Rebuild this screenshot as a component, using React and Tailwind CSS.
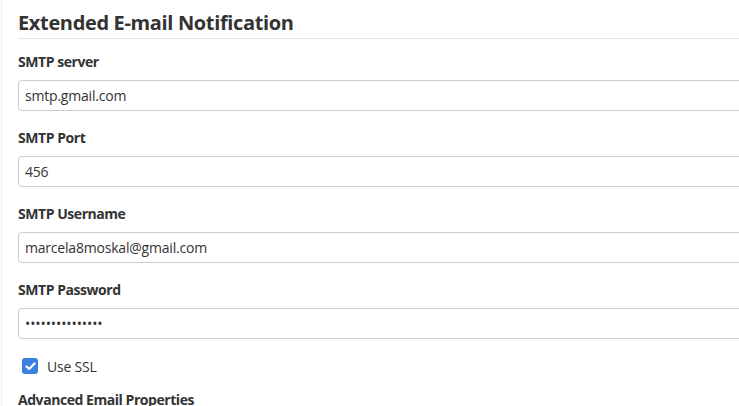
import React from "react";

const font = { fontFamily: '"Open Sans", "Noto Sans", sans-serif' };

function Field({ label, value, type = "text" }) {
  return (
    <div className="mb-[17px]">
      <label className="block text-[14px] leading-[20px] font-bold text-[#333] mb-[8px] tracking-[-0.45px]">{label}</label>
      <div className="h-[31px] border border-[#ccc] rounded-[4px] bg-white flex items-center pl-[6px] text-[14px] text-[#333] mr-[-10px] tracking-[-0.2px]">
        {type === "password" ? (
          <span className="tracking-[-0.1px] text-[14px] leading-none">{"•".repeat(15)}</span>
        ) : (
          value
        )}
      </div>
    </div>
  );
}

export default function App() {
  return (
    <div className="w-[739px] h-[406px] overflow-hidden bg-white pl-[1px]" style={font}>
      <div className="border-l border-[#eee] pl-[16px] h-full pt-[9px]">
        <h2 className="text-[20px] leading-[28px] font-bold text-[#333] pb-[1px] border-b border-[#e5e5e5] mr-[-10px] tracking-[-0.35px]">
          Extended E-mail Notification
        </h2>
        <div className="pt-[13px]">
          <Field label="SMTP server" value="smtp.gmail.com" />
          <Field label="SMTP Port" value="456" />
          <Field label="SMTP Username" value="marcela8moskal@gmail.com" />
          <Field label="SMTP Password" type="password" />
          <div className="flex items-center pl-[4px] h-[20px] mt-[2px]">
            <span className="w-[16px] h-[16px] rounded-[3px] bg-[#3a80e0] flex items-center justify-center">
              <svg width="11" height="9" viewBox="0 0 11 9" fill="none">
                <path d="M1.5 4.5 L4.2 7 L9.5 1.5" stroke="white" strokeWidth="2.2" strokeLinecap="round" strokeLinejoin="round" />
              </svg>
            </span>
            <span className="ml-[9px] text-[14px] text-[#333] tracking-[-0.2px]">Use SSL</span>
          </div>
          <div className="mt-[14px] text-[14px] font-bold text-[#333] leading-[20px] tracking-[-0.45px]">Advanced Email Properties</div>
        </div>
      </div>
    </div>
  );
}
